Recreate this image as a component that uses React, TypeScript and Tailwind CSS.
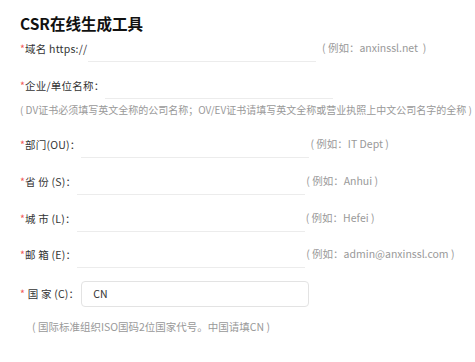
import React from "react";

const font = { fontFamily: '"Noto Sans CJK SC", "Noto Sans", sans-serif' };

function Star({ space = false }: { space?: boolean }) {
  return <span className="text-[#f25a5a]">*{space ? "\u00a0" : ""}</span>;
}

function Row({
  label,
  hint,
  mt,
  star = false,
  value,
  boxed = false,
}: {
  label: string;
  hint?: string;
  mt: string;
  star?: boolean;
  value?: string;
  boxed?: boolean;
}) {
  return (
    <div className={`flex items-center h-[26px] ${mt}`}>
      <span className="whitespace-pre text-[#333] text-[10.5px] leading-[16px] tracking-[0.2px]">
        <Star space={star} />
        {label}
      </span>
      {boxed ? (
        <div className="ml-[2px] w-[228px] h-[26px] border border-[#e3e3e3] rounded-[4px] flex items-center pl-[11px] text-[10.5px] text-[#333]">
          {value}
        </div>
      ) : (
        <div className="ml-[1px] w-[228px] h-[26px] border-b border-[#ececec]" />
      )}
      {hint && (
        <span className="whitespace-pre text-[#999] text-[10.5px] leading-[16px] ml-[1px] -mt-[2px]">
          {hint}
        </span>
      )}
    </div>
  );
}

export default function App() {
  return (
    <div className="w-[475px] h-[362px] bg-white pl-[20px] pt-[11px] overflow-hidden" style={font}>
      <div className="text-[15.5px] font-bold leading-[24px] text-[#111]">CSR在线生成工具</div>
      <Row mt="mt-[1px]" label="域名 https://" hint="  ( 例如：anxinssl.net  )" />
      <Row mt="mt-[11px]" label="企业/单位名称：" />
      <div className="mt-[3px] h-[16px] leading-[16px] text-[10px] text-[#999] whitespace-nowrap">
        ( DV证书必须填写英文全称的公司名称；OV/EV证书请填写英文全称或营业执照上中文公司名字的全称 )
      </div>
      <Row mt="mt-[14px]" label="部门(OU)：" hint="( 例如：IT Dept )" />
      <Row mt="mt-[11px]" label="省 份 (S)：" hint="( 例如：Anhui )" />
      <Row mt="mt-[11px]" label="城 市 (L)：" hint="( 例如：Hefei )" />
      <Row mt="mt-[10px]" label="邮 箱 (E)：" hint="( 例如：admin@anxinssl.com )" />
      <Row mt="mt-[13px]" star label="国 家 (C)：" value="CN" boxed />
      <div className="mt-[12px] ml-[12px] h-[16px] leading-[16px] text-[10.5px] text-[#999] whitespace-nowrap">
        ( 国际标准组织ISO国码2位国家代号。中国请填CN )
      </div>
    </div>
  );
}
